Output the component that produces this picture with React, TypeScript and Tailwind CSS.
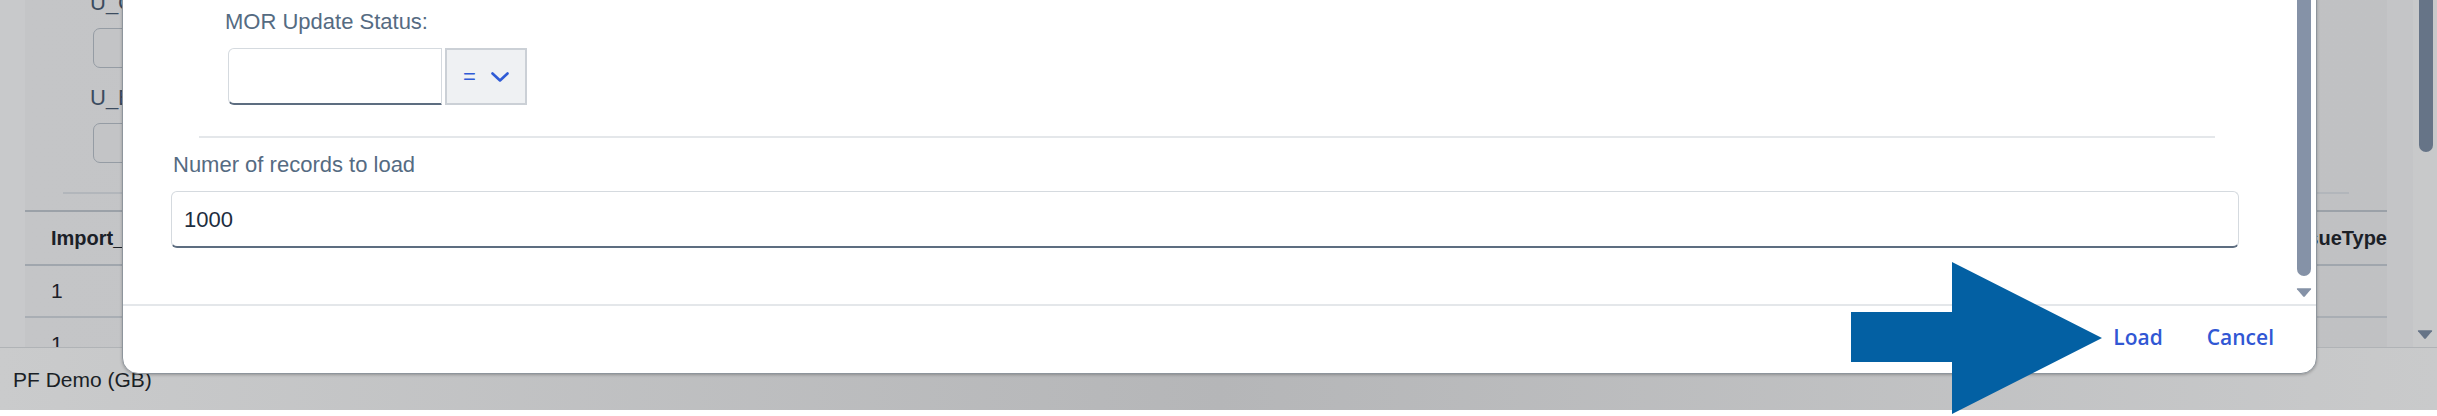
import React from "react";

const font = "font-['Liberation_Sans',Arial,sans-serif]";

function Chevron() {
  return (
    <svg width="18" height="10" viewBox="0 0 18 10" fill="none">
      <polyline points="1.5,1.5 9,8.5 16.5,1.5" stroke="#2f5bd6" strokeWidth="2.6" strokeLinecap="round" strokeLinejoin="round" />
    </svg>
  );
}

function DownTriangle({ color }: { color: string }) {
  return (
    <svg width="16" height="11" viewBox="0 0 16 11">
      <path d="M1.5 1.2 H14.5 Q15.6 1.2 15 2.2 L8.8 9.6 Q8 10.5 7.2 9.6 L1 2.2 Q0.4 1.2 1.5 1.2 Z" fill={color} />
    </svg>
  );
}

function BackgroundApp() {
  return (
    <div className="flex h-[416px] flex-col">
      <div className="flex h-[347px] shrink-0">
        <div className="w-[25px] bg-[#c8c9cb]" />
        <div className="flex w-[2362px] flex-col overflow-hidden bg-gradient-to-r from-[#c4c5c7] via-[#c1c2c4] to-[#c0c1c3] [&>*]:shrink-0">
          <div className="ml-[65px] mt-[-10px] text-[22px] leading-[26px] text-[#3c4c5f]">U_CreateDate</div>
          <div className="ml-[68px] mt-[12px] h-[40px] w-[220px] rounded-[7px] border border-[#959ca4] bg-[#c3c4c6]" />
          <div className="ml-[65px] mt-[17px] text-[22px] leading-[26px] text-[#3c4c5f]">U_ErrorText</div>
          <div className="ml-[68px] mt-[12px] h-[40px] w-[220px] rounded-[7px] border border-[#959ca4] bg-[#c3c4c6]" />
          <div className="mx-[38px] mt-[29px] h-[2px] bg-[#b2b6bb]" />
          <div className="mt-[16px] border-t-2 border-[#9ba1a8]">
            <div className="flex h-[54px] items-center justify-between border-b-2 border-[#a0a6ad] pl-[26px]">
              <span className="text-[20px] font-bold text-[#1b2027]">Import_Date</span>
              <span className="text-[20px] font-bold text-[#1b2027]">IssueType</span>
            </div>
            <div className="flex h-[52px] items-center border-b-2 border-[#a9aeb4] pl-[26px] text-[21px] text-[#1b2027]">1</div>
            <div className="flex h-[52px] items-center pl-[26px] text-[21px] text-[#1b2027]">1</div>
          </div>
        </div>
        <div className="w-[26px] bg-[#c4c5c7]" />
        <div className="flex w-[24px] flex-col items-center bg-[#c8c9ca]">
          <div className="ml-[1px] h-[152px] w-[14px] shrink-0 rounded-b-full bg-[#667487]" />
          <div className="mt-[177px] shrink-0">
            <DownTriangle color="#667487" />
          </div>
        </div>
      </div>
      <div className="flex h-[63px] shrink-0 items-start border-t border-[#b0b3b6] bg-gradient-to-r from-[#cacbcc] via-[#b5b6b8] to-[#c9cacb] pl-[13px] pt-[19px]">
        <span className="text-[21px] leading-[26px] text-[#1a1f26]">PF Demo (GB)</span>
      </div>
      <div className="h-[6px] shrink-0 bg-white" />
    </div>
  );
}

function Dialog() {
  return (
    <div className="absolute left-[122px] top-[-16px] flex h-[390px] w-[2195px] flex-col overflow-hidden rounded-[16px] border border-[#8e959c] bg-white shadow-[0_1px_3px_rgba(0,0,0,0.25)]">
      <div className="flex h-[319px] shrink-0">
        <div className="flex flex-1 flex-col pl-[48px] [&>*]:shrink-0">
          <div className="ml-[54px] mt-[24px] text-[22px] leading-[26px] text-[#556b82]">MOR Update Status:</div>
          <div className="ml-[57px] mt-[13px] flex h-[57px]">
            <div className="h-[57px] w-[214px] rounded-l-[6px] border border-[#d5dadf] border-b-2 border-b-[#5d6d80] bg-white" />
            <div className="ml-[3px] flex h-[57px] w-[82px] items-center justify-center gap-[15px] border-2 border-[#cbd0d6] bg-[#eff1f3]">
              <span className="text-[22px] leading-none text-[#2f5bd6]">=</span>
              <Chevron />
            </div>
          </div>
          <div className="ml-[28px] mt-[31px] h-[2px] w-[2016px] bg-[#e4e7ea]" />
          <div className="ml-[2px] mt-[14px] text-[22px] leading-[26px] text-[#556b82]">Numer of records to load</div>
          <div className="mt-[13px] flex h-[57px] w-[2068px] items-center rounded-[6px] border border-[#d5dadf] border-b-2 border-b-[#5d6d80] bg-white pl-[12px]">
            <span className="text-[22px] text-[#1d2d3e]">1000</span>
          </div>
        </div>
        <div className="mr-[5px] flex w-[15px] flex-col items-center">
          <div className="h-[291px] w-[14px] shrink-0 rounded-b-full bg-[#8592a7]" />
          <div className="mt-[11px] shrink-0">
            <DownTriangle color="#8592a7" />
          </div>
        </div>
      </div>
      <div className="flex h-[70px] items-center justify-end gap-[44px] border-t-2 border-[#e4e7ea] pb-[3px] pr-[42px] font-['Open_Sans',sans-serif]">
        <button className="text-[21px] font-semibold text-[#3157d4]">Load</button>
        <button className="text-[21px] font-semibold text-[#3157d4]">Cancel</button>
      </div>
    </div>
  );
}

function PointerArrow() {
  return (
    <svg className="absolute left-[1851px] top-[262px]" width="252" height="152" viewBox="0 0 252 152">
      <polygon points="0,50 101,50 101,0 251,76 101,152 101,100 0,100" fill="#0360a3" />
    </svg>
  );
}

export default function App() {
  return (
    <div className={`relative h-[416px] w-[2437px] overflow-hidden bg-white ${font}`}>
      <BackgroundApp />
      <Dialog />
      <PointerArrow />
    </div>
  );
}
